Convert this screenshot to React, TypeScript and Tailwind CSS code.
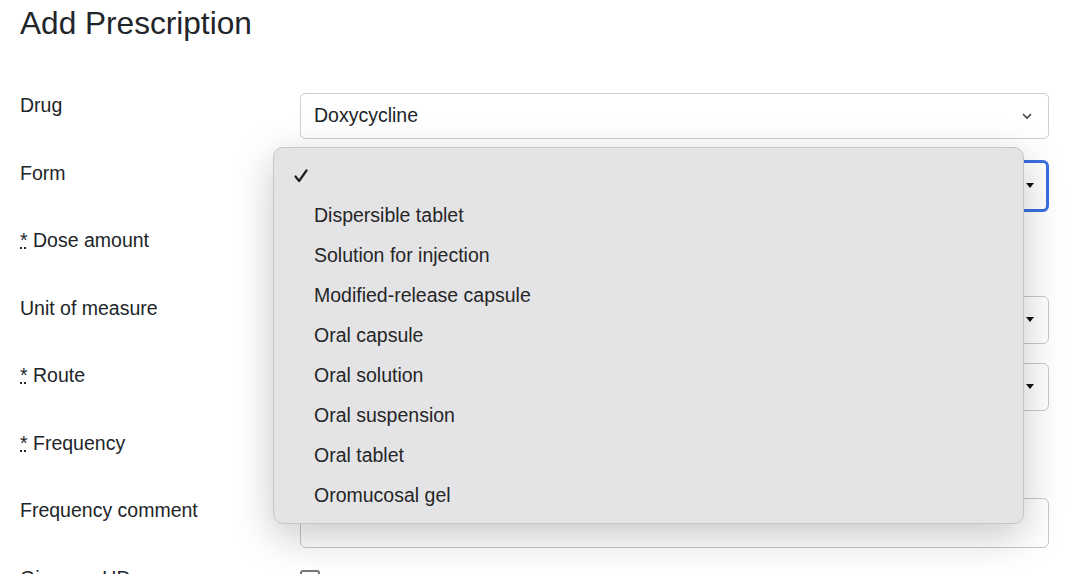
import * as React from "react";

const FORM_OPTIONS = [
  "Dispersible tablet",
  "Solution for injection",
  "Modified-release capsule",
  "Oral capsule",
  "Oral solution",
  "Oral suspension",
  "Oral tablet",
  "Oromucosal gel",
];

function Req() {
  return (
    <abbr title="required" className="underline decoration-dotted">
      *
    </abbr>
  );
}

function Caret() {
  return (
    <svg width="8" height="6" viewBox="0 0 8 6" className="shrink-0">
      <path d="M0 0h8L4 5z" fill="#111" />
    </svg>
  );
}

function Chevron() {
  return (
    <svg width="12" height="8" viewBox="0 0 12 8" className="shrink-0">
      <path d="M2 2l4 4 4-4" fill="none" stroke="#444" strokeWidth="1.6" />
    </svg>
  );
}

function Check() {
  return (
    <svg width="16" height="16" viewBox="0 0 16 16">
      <path
        d="M2.5 8.5l3.6 4.5L13.5 2.5"
        fill="none"
        stroke="#1e1e1e"
        strokeWidth="2.2"
        strokeLinecap="round"
        strokeLinejoin="round"
      />
    </svg>
  );
}

function Row({ label, children }: { label: React.ReactNode; children?: React.ReactNode }) {
  return (
    <div className="flex h-[67.5px] items-start">
      <div className="w-[280px] leading-[24px]">{label}</div>
      <div className="flex-1">{children}</div>
    </div>
  );
}

export default function App() {
  return (
    <div
      className="relative h-[574px] overflow-hidden bg-white pl-[20px] pr-[39px] text-[19.5px] text-[#212529]"
      style={{ fontFamily: '"Liberation Sans", Arial, sans-serif' }}
    >
      <h1 className="pt-[3px] text-[31.6px] leading-[40px]">Add Prescription</h1>

      <div className="mt-[50px]">
        <Row label="Drug">
          <div className="flex h-[46px] items-center justify-between rounded-[5px] border border-[#cfcfcf] bg-white pl-[13px] pr-[15px]">
            <span>Doxycycline</span>
            <Chevron />
          </div>
        </Row>
        <Row label="Form">
          <div className="-mt-[1px] flex h-[52px] items-center justify-end rounded-[6px] border-[3px] border-[#3b6ee0] bg-white pr-[12px]">
            <Caret />
          </div>
        </Row>
        <Row
          label={
            <>
              <Req /> Dose amount
            </>
          }
        >
          <div className="h-[46px] w-[300px] rounded-[5px] border border-[#cfcfcf]" />
        </Row>
        <Row label="Unit of measure">
          <div className="flex h-[48px] items-center justify-end rounded-[6px] border border-[#c8c8c8] bg-white pr-[14px]">
            <Caret />
          </div>
        </Row>
        <Row
          label={
            <>
              <Req /> Route
            </>
          }
        >
          <div className="flex h-[48px] items-center justify-end rounded-[6px] border border-[#c8c8c8] bg-white pr-[14px]">
            <Caret />
          </div>
        </Row>
        <Row
          label={
            <>
              <Req /> Frequency
            </>
          }
        >
          <div className="h-[46px] w-[300px] rounded-[5px] border border-[#cfcfcf]" />
        </Row>
        <Row label="Frequency comment">
          <div className="h-[50px] rounded-[6px] border border-[#c8c8c8] bg-white" />
        </Row>
        <Row label="Given as UD">
          <div className="mt-[4px] h-[20px] w-[20px] rounded-[3px] border-2 border-[#777]" />
        </Row>
      </div>

      <div className="absolute left-[273px] top-[147px] w-[751px] rounded-[10px] border border-[#c6c6c6] bg-[#e4e4e6] pb-[7px] pt-[8px] text-[#262626] shadow-[0_12px_40px_rgba(0,0,0,0.22)]">
        <div className="flex h-[40px] items-center pl-[19px]">
          <Check />
        </div>
        {FORM_OPTIONS.map((o) => (
          <div key={o} className="flex h-[40px] items-center pl-[40px]">
            {o}
          </div>
        ))}
      </div>
    </div>
  );
}
